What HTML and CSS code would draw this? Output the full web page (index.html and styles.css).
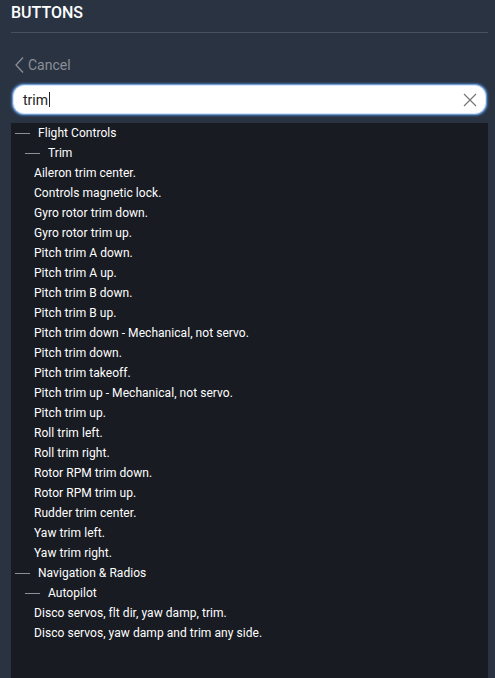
FILE: index.html
```html
<!DOCTYPE html>
<html>
<head>
<meta charset="utf-8">
<link rel="stylesheet" href="styles.css">
</head>
<body>
<div class="page">
  <h1 class="title">BUTTONS</h1>
  <div class="rule"></div>
  <div class="cancel">
    <svg class="chev" width="9" height="16" viewBox="0 0 9 16"><path d="M8 0.5 L1 8 L8 15.5" fill="none" stroke="#8a8f98" stroke-width="1.3"/></svg>
    <span>Cancel</span>
  </div>
  <div class="search">
    <span class="query">trim</span><span class="caret"></span>
    <svg class="clear" width="14" height="14" viewBox="0 0 14 14"><path d="M1 1 L13 13 M13 1 L1 13" fill="none" stroke="#777" stroke-width="1.2"/></svg>
  </div>
  <div class="list">
    <div class="row l1"><span class="dash"></span>Flight Controls</div>
    <div class="row l2"><span class="dash"></span>Trim</div>
    <div class="row item">Aileron trim center.</div>
    <div class="row item">Controls magnetic lock.</div>
    <div class="row item">Gyro rotor trim down.</div>
    <div class="row item">Gyro rotor trim up.</div>
    <div class="row item">Pitch trim A down.</div>
    <div class="row item">Pitch trim A up.</div>
    <div class="row item">Pitch trim B down.</div>
    <div class="row item">Pitch trim B up.</div>
    <div class="row item">Pitch trim down - Mechanical, not servo.</div>
    <div class="row item">Pitch trim down.</div>
    <div class="row item">Pitch trim takeoff.</div>
    <div class="row item">Pitch trim up - Mechanical, not servo.</div>
    <div class="row item">Pitch trim up.</div>
    <div class="row item">Roll trim left.</div>
    <div class="row item">Roll trim right.</div>
    <div class="row item">Rotor RPM trim down.</div>
    <div class="row item">Rotor RPM trim up.</div>
    <div class="row item">Rudder trim center.</div>
    <div class="row item">Yaw trim left.</div>
    <div class="row item">Yaw trim right.</div>
    <div class="row l1"><span class="dash"></span>Navigation &amp; Radios</div>
    <div class="row l2"><span class="dash"></span>Autopilot</div>
    <div class="row item">Disco servos, flt dir, yaw damp, trim.</div>
    <div class="row item">Disco servos, yaw damp and trim any side.</div>
  </div>
</div>
</body>
</html>
```
FILE: styles.css
```css
html, body {
  margin: 0;
  padding: 0;
  background: #2a3342;
  height: 100%;
  overflow: hidden;
}
.page {
  font-family: Roboto, "Liberation Sans", sans-serif;
  padding: 0 7px 0 11px;
  display: flex;
  flex-direction: column;
  height: 100%;
  box-sizing: border-box;
}
.title {
  margin: 0;
  font-size: 16px;
  font-weight: 500;
  color: #ffffff;
  line-height: 26px;
}
.rule {
  margin-top: 6px;
  height: 1px;
  background: #4a505b;
}
.cancel {
  margin-top: 23px;
  display: flex;
  align-items: center;
  gap: 4px;
  height: 18px;
  padding-left: 4px;
  color: #8a8f98;
  font-size: 14px;
}
.search {
  margin-top: 11px;
  height: 27px;
  background: #ffffff;
  border-radius: 11px;
  border: 1px solid #d9e6f7;
  box-shadow: 0 0 0 1px #6f9bd1, 0 0 2px 2px #3f6b9c;
  margin-left: 2px;
  margin-right: 2px;
  display: flex;
  align-items: center;
  padding: 0 8px 0 9px;
  font-size: 14px;
  color: #222;
}
.caret {
  width: 1px;
  height: 15px;
  background: #222;
  margin-left: 1px;
}
.clear {
  margin-left: auto;
}
.list {
  margin-top: 9px;
  flex: 1;
  background: #181b22;
}
.row {
  height: 20px;
  line-height: 20px;
  font-size: 12px;
  letter-spacing: 0.05px;
  color: #ffffff;
  display: flex;
  align-items: center;
  white-space: nowrap;
}
.dash {
  display: inline-block;
  width: 15px;
  height: 1px;
  background: #8a8f98;
  margin-right: 8px;
}
.l1 { padding-left: 4px; }
.l2 { padding-left: 14px; }
.item { padding-left: 23px; }
```
